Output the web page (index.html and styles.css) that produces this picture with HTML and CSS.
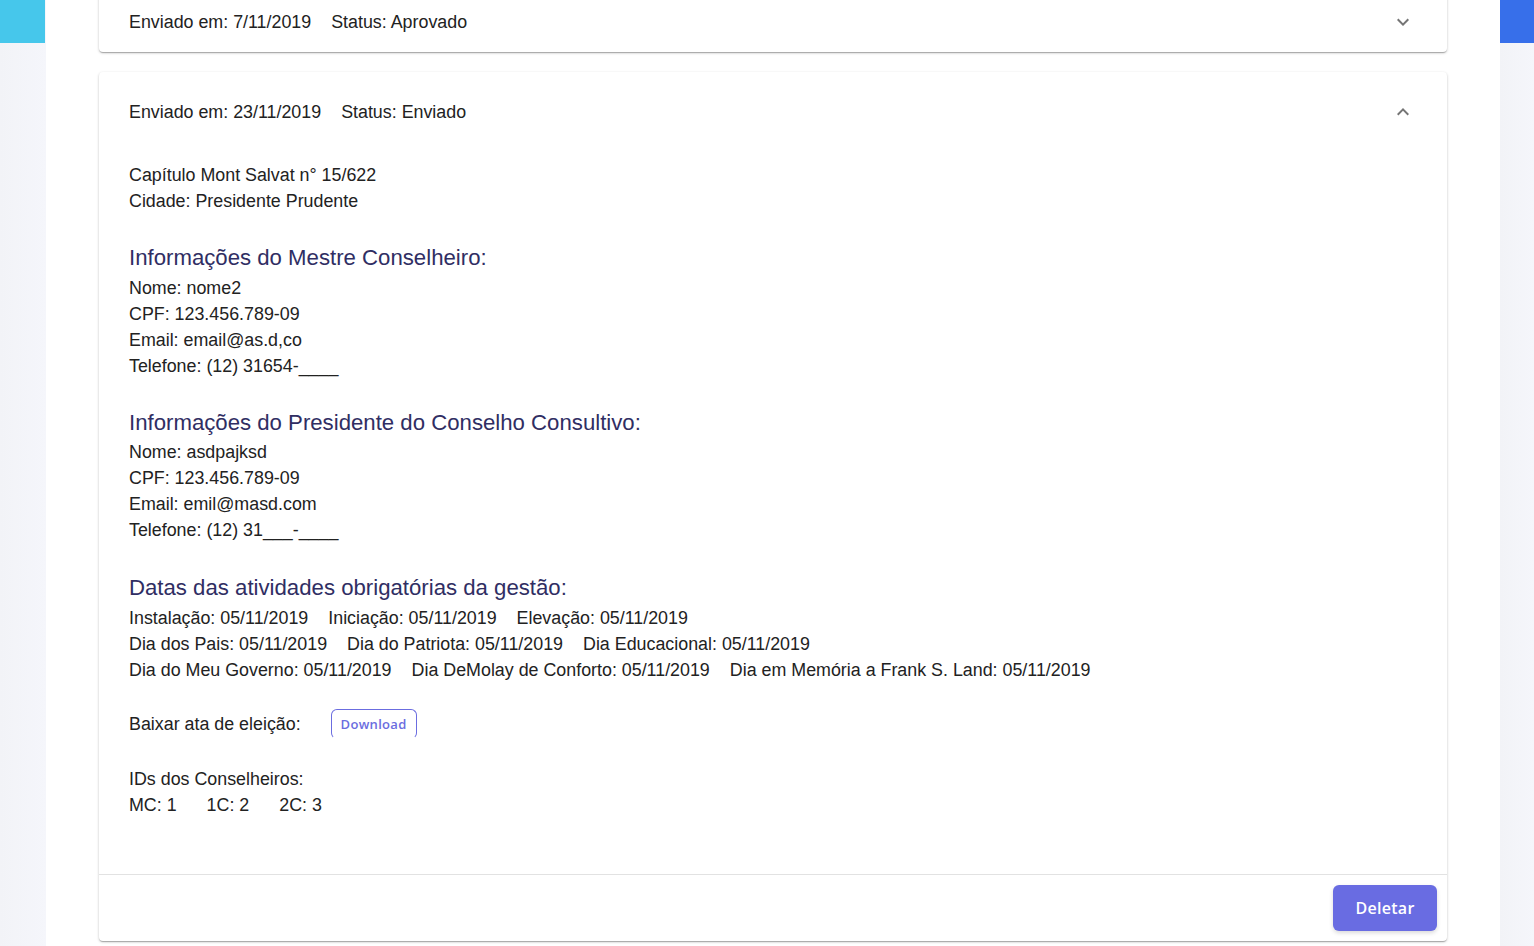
FILE: index.html
```html
<!DOCTYPE html>
<html lang="pt">
<head>
<meta charset="utf-8">
<title>Gestões</title>
<link rel="stylesheet" href="styles.css">
</head>
<body>
<div class="layout">
  <aside class="side side-left"><div class="side-top cyan"></div></aside>
  <main class="main">
    <section class="card collapsed">
      <div class="summary">
        <span>Enviado em: 7/11/2019</span>
        <span>Status: Aprovado</span>
        <svg class="chev" width="24" height="24" viewBox="0 0 24 24"><path d="M7.41 8.59L12 13.17l4.59-4.58L18 10l-6 6-6-6 1.41-1.41z" fill="#757575"/></svg>
      </div>
    </section>
    <section class="card expanded">
      <div class="summary tall">
        <span>Enviado em: 23/11/2019</span>
        <span>Status: Enviado</span>
        <svg class="chev" width="24" height="24" viewBox="0 0 24 24"><path d="M7.41 15.41L12 10.83l4.59 4.58L18 14l-6-6-6 6z" fill="#757575"/></svg>
      </div>
      <div class="details">
        <p>Capítulo Mont Salvat n° 15/622</p>
        <p>Cidade: Presidente Prudente</p>
        <h3>Informações do Mestre Conselheiro:</h3>
        <p>Nome: nome2</p>
        <p>CPF: 123.456.789-09</p>
        <p>Email: email@as.d,co</p>
        <p>Telefone: (12) 31654-____</p>
        <h3>Informações do Presidente do Conselho Consultivo:</h3>
        <p>Nome: asdpajksd</p>
        <p>CPF: 123.456.789-09</p>
        <p>Email: emil@masd.com</p>
        <p>Telefone: (12) 31___-____</p>
        <h3 class="h-last">Datas das atividades obrigatórias da gestão:</h3>
        <p class="row"><span>Instalação: 05/11/2019</span><span>Iniciação: 05/11/2019</span><span>Elevação: 05/11/2019</span></p>
        <p class="row"><span>Dia dos Pais: 05/11/2019</span><span>Dia do Patriota: 05/11/2019</span><span>Dia Educacional: 05/11/2019</span></p>
        <p class="row"><span>Dia do Meu Governo: 05/11/2019</span><span>Dia DeMolay de Conforto: 05/11/2019</span><span>Dia em Memória a Frank S. Land: 05/11/2019</span></p>
        <div class="download-row">
          <span>Baixar ata de eleição:</span>
          <button class="btn-outline">Download</button>
        </div>
        <p class="ids-title">IDs dos Conselheiros:</p>
        <p class="row wide"><span>MC: 1</span><span>1C: 2</span><span>2C: 3</span></p>
      </div>
      <div class="actions">
        <button class="btn-primary">Deletar</button>
      </div>
    </section>
  </main>
  <aside class="side side-right"><div class="side-top blue"></div></aside>
</div>
</body>
</html>
```
FILE: styles.css
```css
* { box-sizing: border-box; }
html, body { margin: 0; padding: 0; }
body {
  font-family: "Liberation Sans", Arial, sans-serif;
  color: #222;
  background: #f3f4f9;
  height: 946px;
  overflow: hidden;
}
.layout {
  display: flex;
  height: 946px;
}
.side {
  background: linear-gradient(90deg, #f2f3f7, #f5f6fb);
}
.side-left { width: 46px; }
.side-right { width: 34px; }
.side-top { height: 43px; }
.side-left .side-top { width: 45px; }
.cyan { background: #46c7eb; }
.blue { background: #376fea; }
.main {
  flex: 1;
  background: #fff;
  padding: 0 53px 0 53px;
  display: flex;
  flex-direction: column;
  gap: 20px;
}
.card {
  background: #fff;
  border-radius: 0 0 4px 4px;
  box-shadow: 0 1px 3px rgba(0,0,0,0.2), 0 1px 1px rgba(0,0,0,0.14), 0 2px 1px -1px rgba(0,0,0,0.12);
}
.collapsed { margin-top: -8px; }
.expanded { border-radius: 4px; }
.summary {
  height: 60px;
  display: flex;
  align-items: center;
  gap: 20px;
  padding: 0 32px 0 30px;
  font-size: 17.85px;
}
.summary.tall { height: 80px; }
.chev { margin-left: auto; }
.details {
  padding: 10px 30px 56px;
  font-size: 17.85px;
  line-height: 26px;
}
.details p { margin: 0; }
.details h3 {
  margin: 27px 0 0;
  font-weight: normal;
  font-size: 22.2px;
  line-height: 33px;
  padding-bottom: 0.5px;
  color: #302e63;
}
.details h3.h-last { margin-top: 28px; padding-bottom: 0.5px; }
.row { display: flex; gap: 20px; }
.row.wide { gap: 30px; }
.download-row {
  margin-top: 26.5px;
  display: flex;
  align-items: center;
  gap: 30px;
  height: 30px;
}
.btn-outline {
  font-family: "Open Sans", sans-serif;
  font-weight: 600;
  font-size: 13px;
  color: #6b6de0;
  background: #fff;
  border: 1px solid #6b6de0;
  border-bottom-color: transparent;
  border-radius: 6px;
  height: 30px;
  padding: 0 9px;
  letter-spacing: 0.3px;
}
.ids-title { margin-top: 27px !important; }
.actions {
  border-top: 1px solid #e2e2e2;
  height: 67px;
  display: flex;
  justify-content: flex-end;
  padding: 10px 10px 0;
}
.btn-primary {
  font-family: "Open Sans", sans-serif;
  font-weight: 600;
  font-size: 16px;
  color: #fff;
  background: #696ce2;
  border: none;
  border-radius: 6px;
  width: 104px;
  height: 46px;
  letter-spacing: 0.3px;
  box-shadow: 0 2px 4px rgba(0,0,0,0.15);
}
```
